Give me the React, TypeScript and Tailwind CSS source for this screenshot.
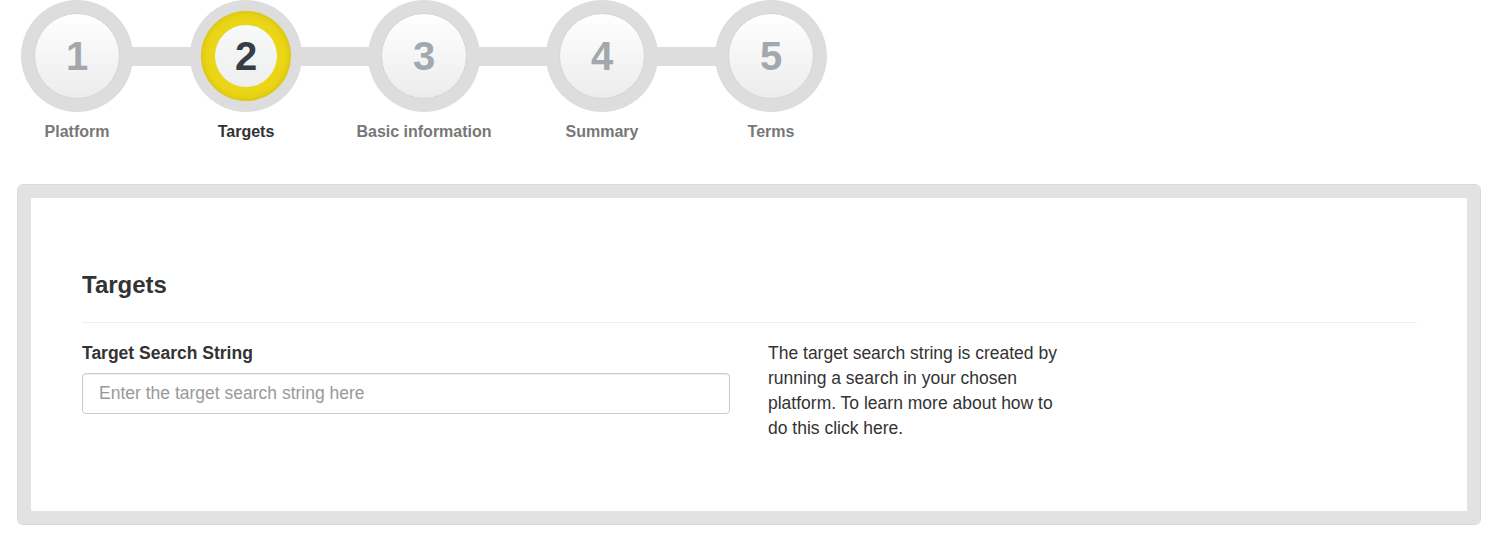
import React from 'react';

const steps = [
  { num: 1, label: 'Platform', width: 'w-[154px]' },
  { num: 2, label: 'Targets', width: 'w-[184px]', active: true },
  { num: 3, label: 'Basic information', width: 'w-[172px]' },
  { num: 4, label: 'Summary', width: 'w-[184px]' },
  { num: 5, label: 'Terms', width: 'w-[154px]' },
];

function StepCircle({ num, active }: { num: number; active?: boolean }) {
  return (
    <div className="relative z-10 w-[112px] h-[112px] rounded-full bg-[#dddddd] flex items-center justify-center">
      {active ? (
        <div className="w-[90px] h-[90px] rounded-full bg-[#ead516] shadow-[inset_0_0_6px_rgba(170,150,0,0.45)] flex items-center justify-center">
          <div className="w-[62px] h-[62px] rounded-full bg-gradient-to-b from-[#f7fafa] to-[#eeeeee] flex items-center justify-center">
            <span className="text-[40px] font-bold leading-none text-[#373c45]">{num}</span>
          </div>
        </div>
      ) : (
        <div className="w-[86px] h-[86px] rounded-full bg-gradient-to-b from-white to-[#ececec] border border-[#d6d6d6] flex items-center justify-center">
          <span className="text-[40px] font-bold leading-none text-[#a2a8ae]">{num}</span>
        </div>
      )}
    </div>
  );
}

export default function App() {
  return (
    <div className="bg-white min-h-screen font-['Liberation_Sans',Arial,sans-serif] text-[#333333]">
      {/* stepper */}
      <div className="relative flex">
        <div className="absolute left-[77px] w-[694px] top-[47px] h-[19px] bg-[#dddddd]" />
        {steps.map((s) => (
          <div key={s.num} className={`${s.width} flex flex-col items-center`}>
            <StepCircle num={s.num} active={s.active} />
            <div
              className={`mt-[10px] text-[16px] leading-[20px] font-bold whitespace-nowrap ${
                s.active ? 'text-[#333333]' : 'text-[#777777]'
              }`}
            >
              {s.label}
            </div>
          </div>
        ))}
      </div>

      {/* panel */}
      <div className="mt-[43px] ml-[18px] mr-[22px] border-[13px] border-[#e2e2e2] rounded-[5px] shadow-[0_0_0_1px_#d9d9d9]">
        <div className="bg-white pt-[73px] pb-[70px] pl-[51px] pr-[50px]">
          <h2 className="text-[24px] leading-[28px] font-bold text-[#333333]">Targets</h2>
          <div className="mt-[23px] h-px bg-[#eeeeee]" />
          <div className="mt-[18px] flex gap-[38px]">
            <div className="w-[648px]">
              <label className="block text-[17.5px] leading-[25px] font-bold text-[#333333]">
                Target Search String
              </label>
              <input
                type="text"
                placeholder="Enter the target search string here"
                className="mt-[7px] w-full h-[41px] px-[16px] border border-[#cccccc] rounded-[4px] text-[17.5px] text-[#555555] placeholder:text-[#999999] outline-none shadow-[inset_0_1px_1px_rgba(0,0,0,0.075)]"
              />
            </div>
            <p className="w-[295px] text-[17.5px] leading-[25px] text-[#333333]">
              The target search string is created by running a search in your chosen platform. To learn more about how to do this click here.
            </p>
          </div>
        </div>
      </div>
    </div>
  );
}
